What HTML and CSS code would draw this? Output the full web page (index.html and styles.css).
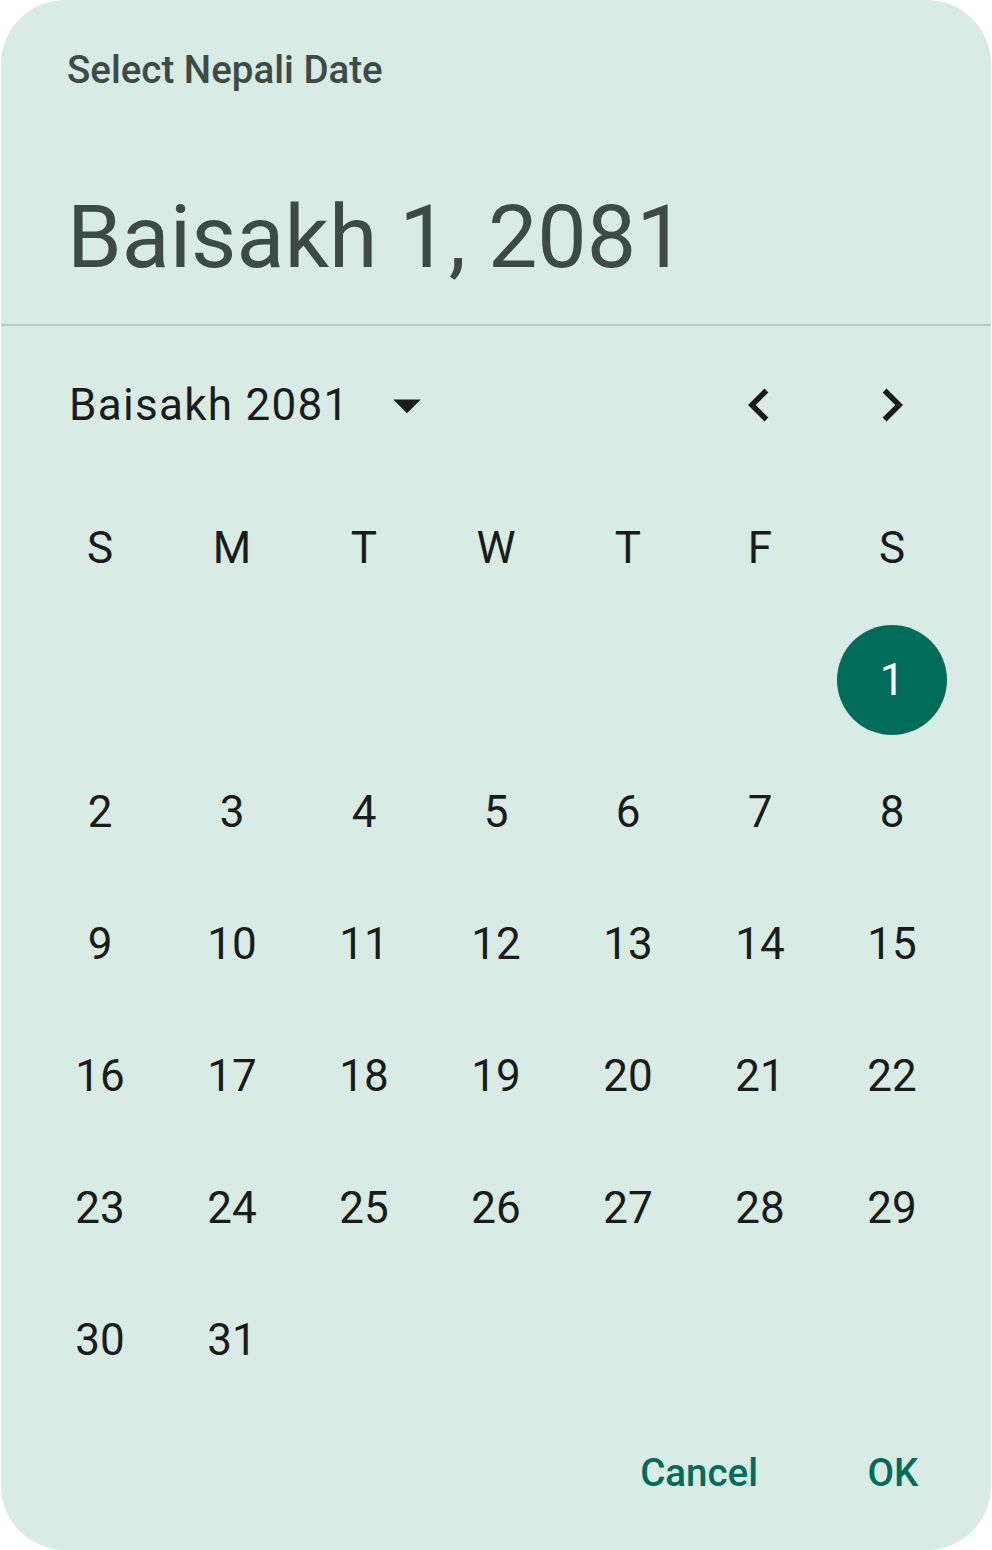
FILE: index.html
```html
<!DOCTYPE html>
<html lang="en">
<head>
<meta charset="utf-8">
<title>Select Nepali Date</title>
<link rel="stylesheet" href="styles.css">
</head>
<body>
<div class="dialog">
  <div class="header">
    <div class="title">Select Nepali Date</div>
    <div class="headline">Baisakh 1, 2081</div>
  </div>
  <div class="divider"></div>
  <div class="nav">
    <div class="month">
      <span class="month-label">Baisakh 2081</span>
      <svg class="icon" viewBox="0 0 24 24"><path d="M7 10l5 5 5-5z"/></svg>
    </div>
    <div class="arrows">
      <svg class="icon" viewBox="0 0 24 24"><path d="M15.41 7.41L14 6l-6 6 6 6 1.41-1.41L10.83 12z"/></svg>
      <svg class="icon" viewBox="0 0 24 24"><path d="M10 6L8.59 7.41 13.17 12l-4.58 4.59L10 18l6-6z"/></svg>
    </div>
  </div>
  <div class="grid">
    <div class="wd">S</div><div class="wd">M</div><div class="wd">T</div><div class="wd">W</div><div class="wd">T</div><div class="wd">F</div><div class="wd">S</div>
    <div class="day"></div><div class="day"></div><div class="day"></div><div class="day"></div><div class="day"></div><div class="day"></div><div class="day"><span class="sel">1</span></div>
    <div class="day">2</div><div class="day">3</div><div class="day">4</div><div class="day">5</div><div class="day">6</div><div class="day">7</div><div class="day">8</div>
    <div class="day">9</div><div class="day">10</div><div class="day">11</div><div class="day">12</div><div class="day">13</div><div class="day">14</div><div class="day">15</div>
    <div class="day">16</div><div class="day">17</div><div class="day">18</div><div class="day">19</div><div class="day">20</div><div class="day">21</div><div class="day">22</div>
    <div class="day">23</div><div class="day">24</div><div class="day">25</div><div class="day">26</div><div class="day">27</div><div class="day">28</div><div class="day">29</div>
    <div class="day">30</div><div class="day">31</div>
  </div>
  <div class="actions">
    <div class="btn cancel">Cancel</div>
    <div class="btn ok">OK</div>
  </div>
</div>
</body>
</html>
```
FILE: styles.css
```css
html, body {
  margin: 0;
  padding: 0;
  background: #ffffff;
}
body {
  font-family: Roboto, "Noto Sans", "Liberation Sans", sans-serif;
}
.dialog {
  box-sizing: border-box;
  width: 990px;
  height: 1550px;
  margin-left: 1px;
  background: #d9ebe5;
  border-radius: 64px;
  overflow: hidden;
  display: flex;
  flex-direction: column;
}
.header {
  padding: 48px 0 0 66px;
  height: 324px;
  box-sizing: border-box;
}
.title {
  font-size: 38.5px;
  font-weight: 500;
  line-height: 44px;
  color: #3d4a45;
}
.headline {
  margin-top: 90px;
  font-size: 88px;
  line-height: 110px;
  color: #3d4a45;
}
.divider {
  height: 2px;
  background: #b7cbc5;
}
.nav {
  margin-top: 46px;
  height: 66px;
  display: flex;
  align-items: center;
  justify-content: space-between;
  padding: 0 66px 0 68px;
}
.month {
  display: flex;
  align-items: center;
  color: #191c1b;
}
.month-label {
  font-size: 44px;
  line-height: 66px;
  letter-spacing: 1.3px;
  padding-right: 24px;
}
.icon {
  width: 66px;
  height: 66px;
  fill: #191c1b;
  display: block;
}
.arrows {
  display: flex;
  gap: 67px;
}
.grid {
  margin-top: 44px;
  padding: 0 34px 0 33px;
  display: grid;
  grid-template-columns: repeat(7, 132px);
  grid-auto-rows: 132px;
}
.wd, .day {
  display: flex;
  align-items: center;
  justify-content: center;
  font-size: 44px;
  color: #191c1b;
}
.sel {
  width: 110px;
  height: 110px;
  border-radius: 50%;
  background: #006c5a;
  color: #ffffff;
  display: flex;
  align-items: center;
  justify-content: center;
}
.actions {
  margin-top: 11px;
  display: flex;
  justify-content: flex-end;
  gap: 14px;
  padding-right: 10px;
}
.btn {
  height: 110px;
  display: flex;
  align-items: center;
  justify-content: center;
  font-size: 38.5px;
  font-weight: 500;
  color: #006c5a;
  padding: 0 33px;
}
.ok {
  min-width: 110px;
}
```
